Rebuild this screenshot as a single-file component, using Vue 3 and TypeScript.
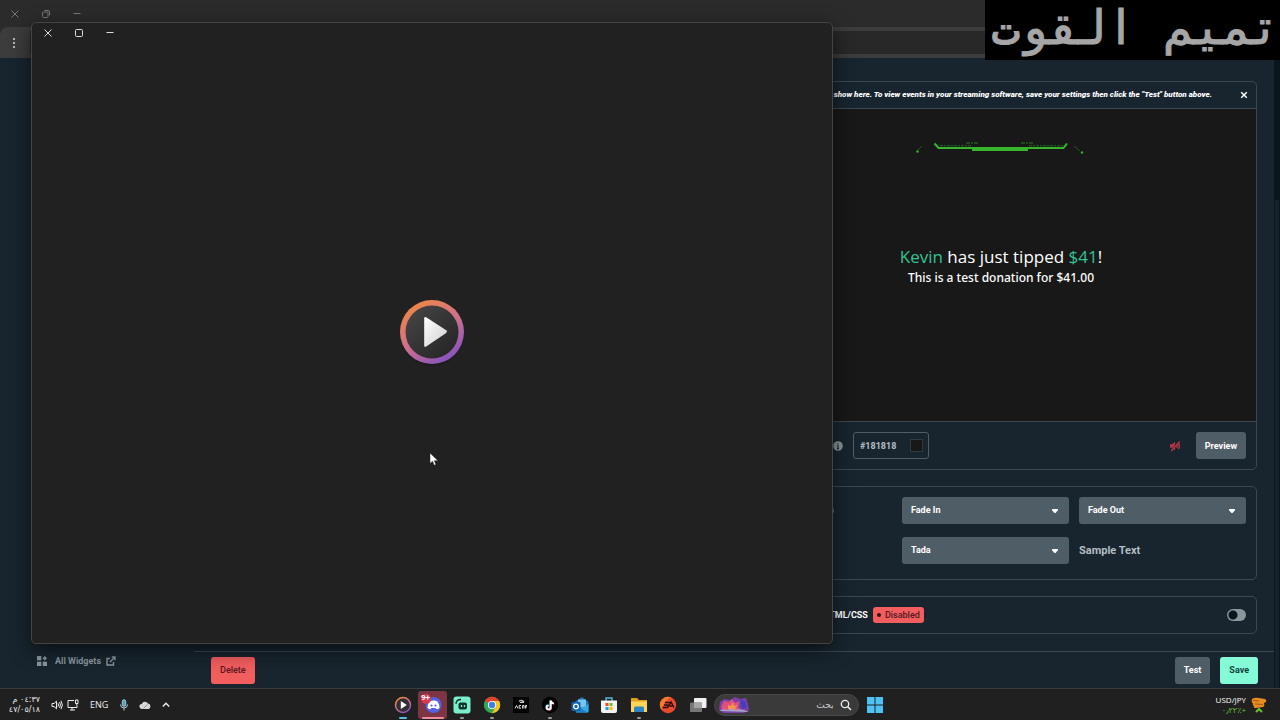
<script setup lang="ts">
import { ref } from 'vue'

const background = ref('#181818')
const showIn = ref('Fade In')
const showOut = ref('Fade Out')
const textAnimation = ref('Tada')
const customCode = ref(false)
const search = ref('')
</script>

<template>
  <div class="desktop">
    <section class="browser">
      <div class="titlebar">
        <button class="caption" aria-label="Close browser">
          <svg viewBox="0 0 10 10" width="10" height="10"><path d="M1.5 1.5l7 7M8.500 1.500l-7 7" /></svg>
        </button>
        <button class="caption" aria-label="Restore browser">
          <svg viewBox="0 0 10 10" width="10" height="10"><rect x="1.500" y="3" width="5.500" height="5.500" rx="1" /><path d="M3.500 1.500h3.500a1.500 1.500 0 0 1 1.500 1.500v3.500" /></svg>
        </button>
        <button class="caption" aria-label="Minimize browser">
          <svg viewBox="0 0 10 10" width="10" height="10"><path d="M1.500 4.500h7" /></svg>
        </button>
      </div>
      <div class="toolbar">
        <button class="kebab" aria-label="Browser menu">
          <svg viewBox="0 0 4 12" width="4" height="12"><circle cx="2" cy="2" r="1" /><circle cx="2" cy="6" r="1" /><circle cx="2" cy="10" r="1" /></svg>
        </button>
        <div class="address"></div>
      </div>

      <div class="page">
        <nav class="sidebar">
          <a href="#" class="nav-link">
            <svg viewBox="0 0 10 10" width="10" height="10" fill="currentColor"><rect x="0" y="0" width="4.300" height="4.300" /><rect x="0" y="5.700" width="4.300" height="4.300" /><rect x="5.700" y="5.700" width="4.300" height="4.300" /><path d="M7.800 0l2.200 2.200-2.200 2.200-2.200-2.200z" /></svg>
            <span>All Widgets</span>
            <svg class="external" viewBox="0 0 10 10" width="10" height="10" fill="none" stroke="currentColor" stroke-width="1.400"><path d="M4 2.500H1v6.500h6.500V6M5.800 1H9v3.200M9 1L4 6" /></svg>
          </a>
        </nav>
        <main class="main">
          <div class="settings">
            <section class="panel">
              <header class="notice">
                <p>show here. To view events in your streaming software, save your settings then click the "Test" button above.</p>
                <button class="dismiss" aria-label="Dismiss">
                  <svg viewBox="0 0 8 8" width="8" height="8"><path d="M1.200 1.200l5.600 5.600M6.800 1.200L1.200 6.800" /></svg>
                </button>
              </header>
              <div class="canvas">
                <svg class="flare" viewBox="0 0 170 14" width="170" height="14" fill="none">
                  <path d="M18.500 2.500l4 4.500h125l3.500-4.500" stroke="#38b52c" stroke-width="2" />
                  <path d="M56 8.500h56" stroke="#38b52c" stroke-width="3" />
                  <path d="M24 4.700h32M113 4.700h34" stroke="#1f6a1a" stroke-width="1" stroke-dasharray="3 1 2 1" />
                  <path d="M50 2h12M105 2h12" stroke="#26781f" stroke-width="1.200" stroke-dasharray="4 1 2 1" />
                  <path d="M6 5L2 9M158 5l6 5" stroke="#265522" stroke-width="1" />
                  <circle cx="1.500" cy="10.500" r="1.200" fill="#38b52c" /><circle cx="166" cy="11.500" r="1.200" fill="#38b52c" />
                </svg>
                <p class="tip"><b>Kevin</b> has just tipped <b>$41</b>!</p>
                <p class="message">This is a test donation for $41.00</p>
              </div>
              <footer class="controls">
                <svg class="info" viewBox="0 0 10 10" width="10" height="10"><circle cx="5" cy="5" r="4.800" fill="#8b959a" /><path d="M5 4.300v3.500M5 2.200v1.200M4 7.600h2M4.200 4.500H5" stroke="#172630" stroke-width="1.100" /></svg>
                <div class="color">
                  <input v-model="background" aria-label="Background color" />
                  <button class="swatch" aria-label="Pick color" :style="{ background }"></button>
                </div>
                <button class="mute" aria-label="Unmute">
                  <svg viewBox="0 0 12 12" width="12" height="12"><path d="M1 4.300h2l3-2.600v8.600L3 7.700H1z" fill="#b23645" /><path d="M7.500 4.200q1.500 1.800 0 3.600M9.300 3q2.200 3 0 6" fill="none" stroke="#b23645" stroke-width="1.400" /><path d="M1.500 10.500L10 1" stroke="#172630" stroke-width="1" /><path d="M2.200 11L10.800 1.400" stroke="#b23645" stroke-width="1.400" /></svg>
                </button>
                <button class="btn">Preview</button>
              </footer>
            </section>

            <section class="panel animations">
              <svg class="info" viewBox="0 0 10 10" width="10" height="10"><circle cx="5" cy="5" r="4.800" fill="#8b959a" /></svg>
              <label class="select">
                <select v-model="showIn" aria-label="Show animation"><option>Fade In</option></select>
                <svg viewBox="0 0 8 6" width="8" height="6"><path d="M1.500 1h5q1 .5.300 1.500L4.500 5h-1L1.200 2.500Q.5 1.500 1.500 1z" /></svg>
              </label>
              <label class="select">
                <select v-model="showOut" aria-label="Hide animation"><option>Fade Out</option></select>
                <svg viewBox="0 0 8 6" width="8" height="6"><path d="M1.500 1h5q1 .5.300 1.500L4.500 5h-1L1.200 2.500Q.5 1.500 1.500 1z" /></svg>
              </label>
              <label class="select second">
                <select v-model="textAnimation" aria-label="Text animation"><option>Tada</option></select>
                <svg viewBox="0 0 8 6" width="8" height="6"><path d="M1.500 1h5q1 .5.300 1.500L4.500 5h-1L1.200 2.500Q.5 1.500 1.500 1z" /></svg>
              </label>
              <p class="sample"><span>Sample</span> Text</p>
            </section>

            <section class="panel code">
              <label for="custom-code">HTML/CSS</label>
              <span class="badge"><i></i>Disabled</span>
              <input id="custom-code" v-model="customCode" class="toggle" type="checkbox" />
            </section>
          </div>
          <footer class="actions">
            <button class="btn danger">Delete</button>
            <button class="btn">Test</button>
            <button class="btn save">Save</button>
          </footer>
        </main>
        <div class="scrollbar"><div class="thumb"></div></div>
      </div>
    </section>

    <section class="player" aria-label="Media player">
      <div class="player-bar">
        <button class="caption" aria-label="Close">
          <svg viewBox="0 0 10 10" width="10" height="10"><path d="M1.500 1.500l7 7M8.500 1.500l-7 7" /></svg>
        </button>
        <button class="caption" aria-label="Maximize">
          <svg viewBox="0 0 10 10" width="10" height="10"><rect x="1.500" y="1.500" width="7" height="7" rx="1" /></svg>
        </button>
        <button class="caption" aria-label="Minimize">
          <svg viewBox="0 0 10 10" width="10" height="10"><path d="M1.500 4.500h7" /></svg>
        </button>
      </div>
      <div class="player-body">
        <svg viewBox="0 0 72 72" width="72" height="72">
          <defs>
            <linearGradient id="ring" x1="0.200" y1="0" x2="0.800" y2="1"><stop offset="0" stop-color="#f0893f" /><stop offset="0.500" stop-color="#d0708c" /><stop offset="1" stop-color="#7b4fc4" /></linearGradient>
            <linearGradient id="disc" x1="0" y1="0" x2="1" y2="1"><stop offset="0" stop-color="#484848" /><stop offset="1" stop-color="#222" /></linearGradient>
            <linearGradient id="tri" x1="0" y1="0" x2="1" y2="1"><stop offset="0" stop-color="#fff" /><stop offset="1" stop-color="#cfcfcf" /></linearGradient>
          </defs>
          <circle cx="36" cy="38" r="32" fill="#161616" opacity="0.500" />
          <circle cx="36" cy="36" r="32" fill="url(#ring)" />
          <circle cx="36" cy="36" r="26.500" fill="url(#disc)" />
          <path d="M28.200 22.500q0-2 2-1.200l20 13q1.500 1.200 0 2.800l-20 13.500q-2 1-2-1z" fill="url(#tri)" />
        </svg>
      </div>
    </section>

    <div class="overlay" dir="rtl">تميم القوت</div>

    <svg class="cursor" viewBox="0 0 10 14" width="10" height="14"><path d="M1 1v10.500l2.500-2.200 1.700 3.900 1.700-.8-1.600-3.700H9z" fill="#fff" stroke="#222" stroke-width="0.500" /></svg>

    <footer class="taskbar">
      <div class="tray">
        <time class="clock" dir="rtl"><span>٠٤:٣٧ م</span><span>٤٧/٠٥/١٨</span></time>
        <svg class="volume" viewBox="0 0 12 12" width="12" height="12"><path d="M1 4.500h2l2.500-2.300v7.600L3 7.500H1zM7 4.300q1.200 1.700 0 3.400M8.500 3q2 3 0 6M10 1.800q2.700 4.200 0 8.400" /></svg>
        <svg class="network" viewBox="0 0 12 12" width="12" height="12"><path d="M7 1.500H1v7h9V6.500M5 8.500V11M3 11h5M8.500 1h2.500v3.500H8.500zM9.800 4.500v2" /></svg>
        <span class="lang">ENG</span>
        <svg class="mic" viewBox="0 0 10 12" width="10" height="12"><rect x="3.300" y="0.800" width="3.400" height="6.500" rx="1.700" fill="#4e9fbe" /><path d="M1.500 5.500q0 3.500 3.500 3.500t3.500-3.500M5 9v2.500" /></svg>
        <svg class="cloud" viewBox="0 0 12 10" width="12" height="10"><path d="M3 9a2.500 2.500 0 0 1-.2-5A3.500 3.500 0 0 1 9 3.500 2.800 2.800 0 0 1 9.300 9z" fill="#d8d8d8" /><path d="M4.500 8.500l4-4" stroke="#888" /></svg>
        <svg class="up" viewBox="0 0 10 10" width="10" height="10"><path d="M1.800 6.500L5 3.300l3.200 3.200" stroke-width="1.400" /></svg>
      </div>

      <div class="dock">
        <div class="apps">
          <button class="app active" aria-label="Media Player">
            <svg viewBox="0 0 18 18" width="18" height="18"><circle cx="9" cy="9" r="7.500" fill="#303034" stroke="url(#ring)" stroke-width="1.500" /><path d="M6.800 5l6 4-6 4z" fill="#fff" /></svg>
          </button>
          <button class="app alert" aria-label="Discord">
            <svg viewBox="0 0 26 26" width="26" height="26"><circle cx="13.500" cy="13" r="8" fill="#5260e8" /><path d="M9.500 9.500q4-2 8 0 2 3 2 6.500-1.500 1.200-3 1.300l-.8-1.300h-4.400l-.8 1.300q-1.500 0-3-1.300 0-3.500 2-6.500z" fill="#fff" /><circle cx="11.500" cy="13.500" r="1.100" fill="#5260e8" /><circle cx="15.500" cy="13.500" r="1.100" fill="#5260e8" /><circle cx="6" cy="7" r="5" fill="#d83b50" /></svg>
            <span class="count">9+</span>
          </button>
          <button class="app running" aria-label="Streamlabs">
            <svg viewBox="0 0 18 18" width="18" height="18"><rect x="0.500" y="0.500" width="17" height="17" rx="3" fill="#79f0cb" /><rect x="5.500" y="6.500" width="8.500" height="7" rx="2" fill="#12342e" /><path d="M3 8q0-4.500 5-4.500" fill="none" stroke="#12342e" stroke-width="1.300" /><path d="M8.500 9v2M11.500 9v2" stroke="#79f0cb" stroke-width="1.300" /></svg>
          </button>
          <button class="app running" aria-label="Chrome">
            <svg viewBox="0 0 18 18" width="18" height="18"><circle cx="9" cy="9" r="8.200" fill="#30a852" /><path d="M9 9L1.900 4.900A8.200 8.200 0 0 1 16.100 4.900H9z" fill="#e6402e" /><path d="M9 9l3.600 2.100L9 17.200A8.200 8.200 0 0 0 16.100 4.900H9z" fill="#fac317" /><circle cx="9" cy="9" r="4.100" fill="#fff" /><circle cx="9" cy="9" r="3.200" fill="#3f7ee8" /></svg>
          </button>
          <button class="app" aria-label="Game launcher">
            <svg viewBox="0 0 18 18" width="18" height="18"><rect x="1" y="1" width="16" height="16" fill="#030303" /><path d="M7 5.500q2-2.500 4.500 0l-3.500 1h4" fill="none" stroke="#ccc" stroke-width="1.100" /><path d="M3 12.500l1.500-3 1.500 3M9 9.500H7.200v2.700H9M10.500 12.500V9.500h1.500v3M15 9.500h-1.500v3M13.500 11H15" fill="none" stroke="#ddd" stroke-width="1" /></svg>
          </button>
          <button class="app running" aria-label="TikTok">
            <svg viewBox="0 0 18 18" width="18" height="18"><circle cx="9" cy="9" r="8.200" fill="#020202" /><g fill="none" stroke-width="1.700"><path d="M9.200 4.500v6.700a2 2 0 1 1-2-2M9.200 4.500q.5 2.800 3 3" stroke="#35d8dc" /><path d="M10.200 5v6.700a2 2 0 1 1-2-2M10.200 5q.5 2.500 3 2.800" stroke="#e93b5e" /><path d="M9.700 4.500v7a2 2 0 1 1-2-2M9.700 4.500q.5 2.800 3.200 3" stroke="#fff" /></g></svg>
          </button>
          <button class="app" aria-label="Outlook">
            <svg viewBox="0 0 18 18" width="18" height="18"><path d="M3.500 6L11 1l6.500 5v9.500h-13z" fill="#2271c0" /><path d="M7 3.500h8v8H7z" fill="#74c7ee" /><path d="M5 16l12.500-8v7.500q0 1-1 1H5z" fill="#37a9e4" /><path d="M5 10l12 6.500H5z" fill="#1b82cf" /><rect x="0.500" y="6" width="9" height="9" rx="1" fill="#1463ae" /><circle cx="5" cy="10.500" r="2.300" fill="none" stroke="#fff" stroke-width="1.300" /></svg>
          </button>
          <button class="app" aria-label="Microsoft Store">
            <svg viewBox="0 0 18 18" width="18" height="18"><path d="M6 5V2h6v3" fill="none" stroke="#56b7e5" stroke-width="1.400" /><path d="M1 4.500h16V15q0 2-2 2H3q-2 0-2-2z" fill="#f2f2f2" /><path d="M5.500 7h3v3h-3z" fill="#eb4b2a" /><path d="M9.500 7h3v3h-3z" fill="#78b820" /><path d="M5.500 11h3v3h-3z" fill="#1da1e5" /><path d="M9.500 11h3v3h-3z" fill="#f8b90d" /></svg>
          </button>
          <button class="app running" aria-label="File Explorer">
            <svg viewBox="0 0 18 18" width="18" height="18"><path d="M1 2h6l2 2h8v6H1z" fill="#dca21d" /><path d="M1 5.500h16V16H1z" fill="#fcd458" /><path d="M4 12q0-1.500 1.500-1.500h7q1.500 0 1.500 1.500v4H4z" fill="#2b84c6" /></svg>
          </button>
          <button class="app" aria-label="EA">
            <svg viewBox="0 0 18 18" width="18" height="18"><circle cx="9" cy="9" r="8.200" fill="#e9492e" /><path d="M1 7a8 8 0 0 1 11-5.500Q5 4 3 14A8 8 0 0 1 1 7z" fill="#f47b2b" /><path d="M6 6.500h4.500M5 9h4M3.500 11.500h5l3.500-5.500 3 5.500M10.500 10h3" fill="none" stroke="#2b1010" stroke-width="1.400" /></svg>
          </button>
          <button class="app" aria-label="Task view">
            <svg viewBox="0 0 18 18" width="18" height="18"><rect x="5" y="2" width="12.500" height="10" rx="1" fill="#f0f0f0" /><rect x="1" y="6.500" width="12" height="9.500" rx="1" fill="#777" /><path d="M5 6.500h8V12H5z" fill="#a6a6a6" /></svg>
          </button>
        </div>
        <label class="search">
          <svg viewBox="0 0 32 18" width="32" height="18"><path d="M1 13l1-7 4-3 6 1 5-3 6 2 5-1 2 6 1 6-5 3H5z" fill="#7b3fa8" /><path d="M3 11l3-6 5 1 3-3 3 4 5-2-2 6 3 3-8 1H5z" fill="#e0507b" /><path d="M10 9l3 1 2-4 1 4 4-1-3 3 2 2-9-1z" fill="#f7944d" /><path d="M22 4l5 1 2 6-5 2z" fill="#403fc0" /><path d="M1 15q4-3 8-1 5-2 8 0 6-2 14 2z" fill="#a7a3c8" /></svg>
          <input v-model="search" dir="rtl" placeholder="بحث" aria-label="بحث" />
          <svg viewBox="0 0 12 12" width="12" height="12"><circle cx="5" cy="5" r="3.700" fill="none" stroke="#eee" stroke-width="1.300" /><path d="M7.800 7.800L11 11" stroke="#eee" stroke-width="1.500" /></svg>
        </label>
        <button class="app start" aria-label="Start">
          <svg viewBox="0 0 18 18" width="18" height="18"><path d="M1 1h7.500v7.500H1zM9.500 1H17v7.500H9.500zM1 9.500h7.500V17H1zM9.500 9.500H17V17H9.500z" fill="#4cc2f5" /></svg>
        </button>
      </div>

      <div class="market">
        <div class="rate"><span>USD/JPY</span><span class="gain">٠٫٢٢٪+</span></div>
        <svg viewBox="0 0 16 18" width="16" height="18"><path d="M1 3q3-2 7-1l6 1q2 1 1 3l-2 1q1 3-1 4l-7 1q-3 0-2-2-2-1-1-2.500Q0 6 1 3z" fill="#e98a22" /><path d="M2 4.500l6 .5M4 8l8 .5" stroke="#a95812" /><path d="M5 16l3-3 3 3" fill="none" stroke="#67c533" stroke-width="2" /></svg>
      </div>
    </footer>
  </div>
</template>

<style>
body {
  margin: 0;
  background: #18252e;
}
</style>

<style scoped>
* {
  box-sizing: border-box;
}
p {
  margin: 0;
}
button,
input,
select {
  font: inherit;
  color: inherit;
  border: 0;
  background: none;
  padding: 0;
  margin: 0;
}
svg {
  display: block;
  flex: none;
}
.desktop {
  position: relative;
  display: flex;
  flex-direction: column;
  min-height: 100vh;
  overflow: hidden;
  font: 700 9px/14px Roboto, "DejaVu Sans", sans-serif;
  color: #fff;
}
.browser {
  flex: 1;
  display: flex;
  flex-direction: column;
  background: #2b2b2b;
}
.titlebar {
  height: 27px;
  display: flex;
  align-items: center;
  margin-left: -1px;
  color: #777;
}
.caption {
  width: 31px;
  height: 20px;
  display: grid;
  place-items: center;
}
.caption svg {
  fill: none;
  stroke: currentColor;
}
.toolbar {
  height: 31px;
  display: flex;
  align-items: center;
  gap: 14px;
  padding-left: 12px;
  background: #3c3c3c;
  border-top-left-radius: 8px;
}
.kebab svg {
  fill: #ddd;
}
.address {
  flex: 1;
  height: 23px;
  background: #282828;
}
.page {
  flex: 1;
  display: flex;
  background: #18252e;
}
.sidebar {
  width: 194px;
  display: flex;
  align-items: flex-end;
  padding: 0 0 20px 37px;
}
.nav-link {
  display: flex;
  align-items: center;
  gap: 8px;
  color: #8a969c;
  text-decoration: none;
}
.nav-link .external {
  margin-left: -3px;
}
.main {
  flex: 1;
  display: flex;
  flex-direction: column;
}
.settings {
  flex: 1;
  width: 529px;
  margin-left: auto;
  padding: 23px 17px 16px 0;
  display: flex;
  flex-direction: column;
  gap: 16px;
}
.panel {
  border: 1px solid #3b484f;
  border-radius: 5px;
}
.notice {
  height: 27px;
  display: flex;
  align-items: center;
  justify-content: flex-end;
  gap: 28px;
  padding-right: 8px;
  border-bottom: 1px solid #3b484f;
  white-space: nowrap;
  font-size: 8px;
  font-style: italic;
  font-weight: 900;
}
.dismiss svg {
  stroke: #fff;
  stroke-width: 1.5;
}
.canvas {
  height: 312px;
  display: flex;
  flex-direction: column;
  align-items: center;
  padding-top: 32px;
  background: #181818;
  font-family: "Noto Sans", "Open Sans", sans-serif;
}
.tip {
  margin-top: 90px;
  font: 400 17px/24px "Open Sans", "Noto Sans", sans-serif;
}
.tip b {
  color: #35c391;
  font-weight: 400;
}
.message {
  font-size: 12px;
  line-height: 17px;
  font-weight: 500;
}
.controls {
  height: 48px;
  display: flex;
  align-items: center;
  padding: 0 10px 0 87px;
  border-top: 1px solid #3b484f;
}
.color {
  width: 76px;
  height: 27px;
  margin-left: 10px;
  display: flex;
  align-items: center;
  justify-content: space-between;
  padding: 0 5px 0 6px;
  border: 1px solid #4f5e66;
  border-radius: 3px;
  color: #b4bec3;
}
.color input {
  width: 44px;
}
.swatch {
  width: 13px;
  height: 13px;
  border: 1px solid #303a3d;
}
.mute {
  margin: 0 15px 0 auto;
}
.btn {
  height: 27px;
  padding: 0 9px;
  border-radius: 3px;
  background: #4f5e66;
  color: #fff;
}
.animations {
  height: 94px;
  display: grid;
  grid-template-columns: 1fr 167px 167px;
  grid-auto-rows: 27px;
  gap: 13px 10px;
  align-items: center;
  padding: 10px;
}
.animations .info {
  justify-self: end;
  margin-right: 58px;
}
.second {
  grid-column: 2;
}
.select {
  height: 27px;
  display: flex;
  align-items: center;
  padding: 0 10px 0 9px;
  border-radius: 3px;
  background: #4f5e66;
}
.select select {
  flex: 1;
  height: 100%;
  padding-bottom: 2px;
  appearance: none;
  outline: 0;
}
.select svg {
  fill: #fff;
}
.sample {
  color: #b4bec3;
  font-size: 11px;
}
.sample span {
  font-size: 11px;
}
.code {
  height: 38px;
  display: flex;
  align-items: center;
  gap: 5px;
  padding: 0 10px 0 77px;
}
.badge {
  height: 16px;
  display: flex;
  align-items: center;
  gap: 4px;
  padding: 0 4px;
  border-radius: 3px;
  background: #f25d5e;
  color: #55191e;
  font-weight: 500;
}
.badge i {
  width: 4px;
  height: 4px;
  border-radius: 50%;
  background: #301015;
}
.toggle {
  appearance: none;
  width: 19px;
  height: 12px;
  margin-left: auto;
  border-radius: 6px;
  background: radial-gradient(circle at 6px 6px, #0b161c 4px, #8a969c 5px);
}
.actions {
  height: 37px;
  display: flex;
  align-items: center;
  gap: 10px;
  padding: 0 16px 0 17px;
  border-top: 1px solid #3b484f;
}
.danger {
  margin-right: auto;
  background: #f25d5e;
  color: #55191e;
  font-weight: 500;
}
.save {
  background: #84fbd6;
  color: #12433d;
}
.scrollbar {
  width: 6px;
  padding-top: 142px;
  display: flex;
  justify-content: center;
  background: #0b161c;
}
.thumb {
  width: 4px;
  background: #14222b;
}
.player {
  position: absolute;
  left: 31px;
  top: 22px;
  width: calc(100% - 478px);
  height: calc(100% - 98px);
  display: flex;
  flex-direction: column;
  border: 1px solid #444;
  border-radius: 5px;
  background: #212121;
  box-shadow: 0 6px 20px rgba(0, 0, 0, 0.6);
}
.player-bar {
  height: 20px;
  display: flex;
}
.player-bar .caption {
  color: #ddd;
}
.player-body {
  flex: 1;
  display: grid;
  place-items: center;
  padding-bottom: 22px;
}
.overlay {
  position: absolute;
  top: 0;
  right: 0;
  width: 295px;
  height: 60px;
  background: #000;
  color: #a6a6a6;
  font: 48px/54px "DejaVu Sans Mono", monospace;
  -webkit-text-stroke: 1px #a6a6a6;
  white-space: nowrap;
}
.cursor {
  position: absolute;
  left: 429px;
  top: 452px;
}
.taskbar {
  position: relative;
  height: 32px;
  display: grid;
  grid-template-columns: 1fr auto 1fr;
  align-items: center;
  padding-right: 2px;
  background: #202020;
  border-top: 1px solid #393d40;
}
.tray {
  display: flex;
  align-items: center;
  padding-left: 10px;
  color: #eee;
}
.tray svg {
  fill: none;
  stroke: currentColor;
}
.clock,
.rate {
  display: flex;
  flex-direction: column;
  font: 8px/10px "DejaVu Sans", sans-serif;
}
.clock {
  width: 30px;
  white-space: nowrap;
}
.volume {
  margin-left: 11px;
}
.network {
  margin-left: 4px;
}
.lang {
  margin: 0 11px;
  font: 9px/12px "Open Sans", sans-serif;
}
.mic {
  color: #aacfdd;
}
.cloud {
  margin: 0 10px;
}
.tray .cloud {
  stroke: none;
}
.dock {
  display: flex;
  align-items: center;
  gap: 1px;
}
.apps {
  width: 324px;
  display: flex;
}
.app {
  position: relative;
  flex: 1;
  height: 28px;
  display: grid;
  place-items: center;
}
.start {
  width: 30px;
}
.running::after,
.active::after,
.alert::after {
  content: "";
  position: absolute;
  left: 50%;
  bottom: 0;
  width: 4px;
  height: 2px;
  margin-left: -2px;
  border-radius: 1px;
  background: #999;
}
.active::after {
  width: 8px;
  margin-left: -4px;
  background: #55bedf;
}
.alert {
  border-radius: 3px;
  background: #7d3443;
}
.alert::after {
  width: 22px;
  margin-left: -11px;
  background: #ee8c99;
}
.count {
  position: absolute;
  left: 3px;
  top: 2px;
  font-size: 8px;
  line-height: 10px;
}
.search {
  width: 145px;
  height: 22px;
  display: flex;
  align-items: center;
  gap: 6px;
  padding: 0 6px 0 3px;
  border: 1px solid #484848;
  border-radius: 11px;
  background: #3a3a3a;
}
.search input {
  flex: 1;
  min-width: 0;
  font: 9px/16px "DejaVu Sans", sans-serif;
  outline: 0;
}
.search input::placeholder {
  color: #ccc;
  opacity: 1;
}
.market {
  display: flex;
  align-items: center;
  justify-content: flex-end;
  gap: 5px;
  padding-right: 11px;
}
.rate {
  align-items: flex-end;
  font-family: "Open Sans", "DejaVu Sans", sans-serif;
}
.gain {
  color: #67c533;
}
</style>
